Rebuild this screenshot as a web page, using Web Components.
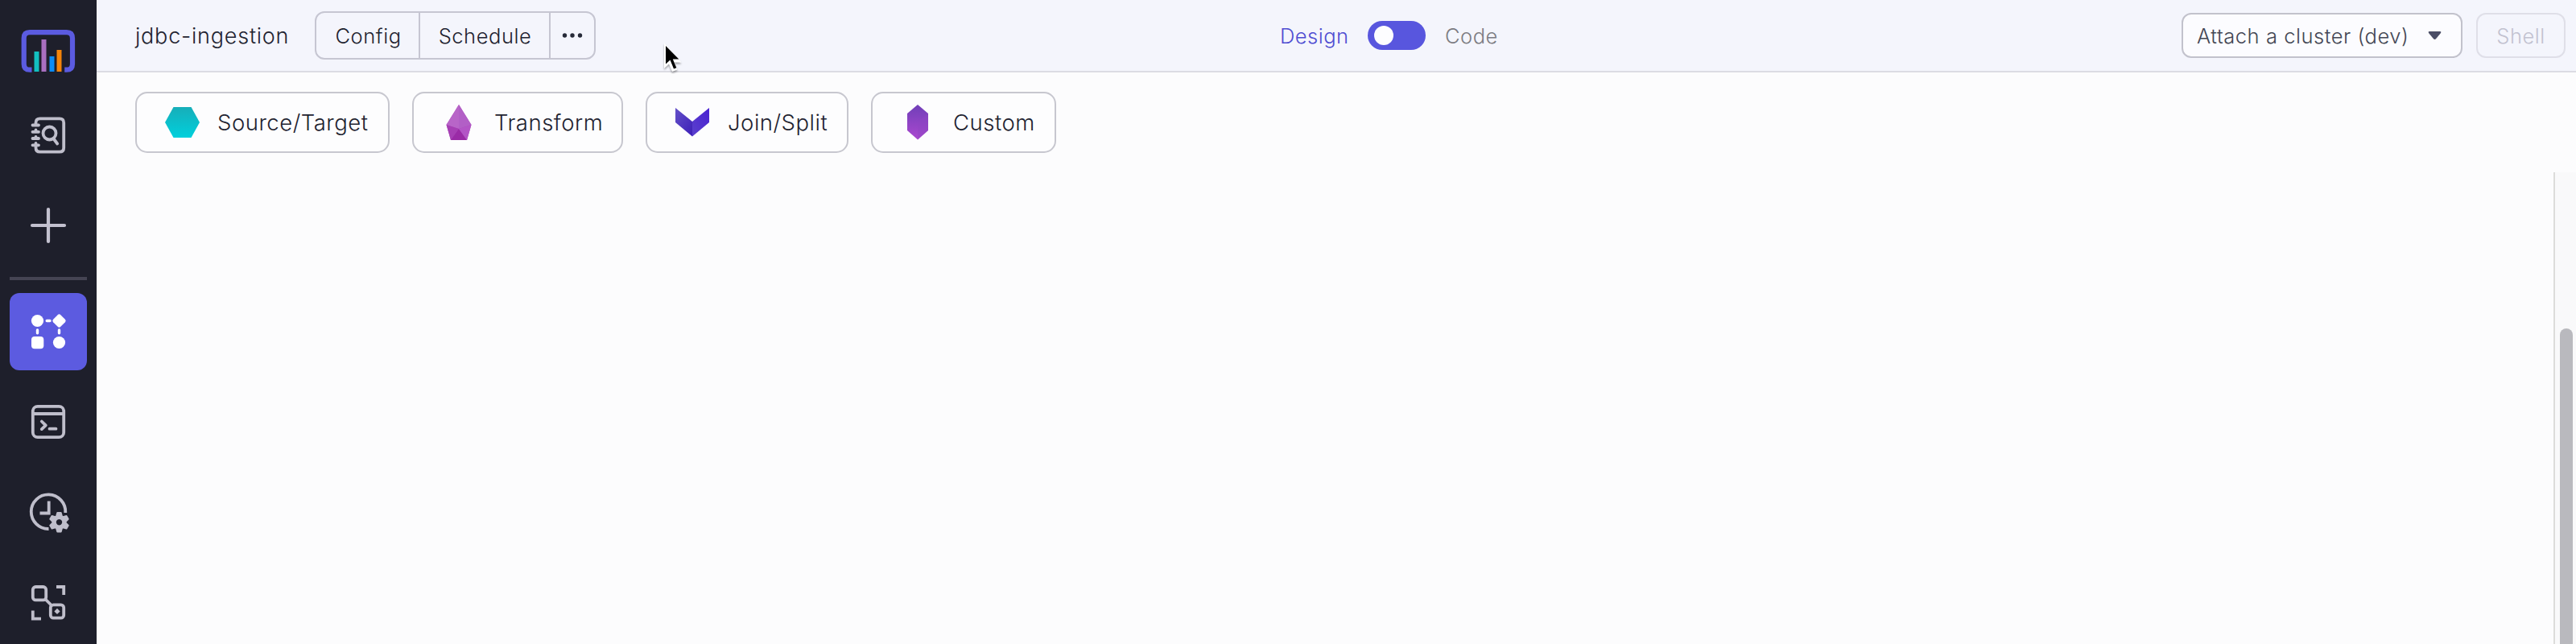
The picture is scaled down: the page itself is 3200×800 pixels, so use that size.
<!DOCTYPE html>
<html lang="en">
<head>
<meta charset="utf-8">
<title>jdbc-ingestion</title>
<style>
html,body{margin:0;height:100%;overflow:hidden}
body{font-family:Inter,"Liberation Sans",sans-serif;font-weight:300;color:#1f2330}
</style>
</head>
<body>
<pipeline-app></pipeline-app>
<script>
const define = (name, css, html) => customElements.define(name, class extends HTMLElement {
  constructor() {
    super();
    this.attachShadow({mode: 'open'}).innerHTML = `<style>*{box-sizing:border-box}svg{display:block}${css}</style>${html}`;
  }
});

define('nav-item', `
:host{display:flex;align-items:center;justify-content:center;width:96px;height:96px;flex:none;border-radius:12px}
:host([active]){background:#5c5be0}`, `<slot></slot>`);

define('side-nav', `
:host{display:flex;flex-direction:column;align-items:center;width:120px;height:800px;background:#1e1f2b;overflow:hidden}
svg{flex:none}
.logo{margin-top:37px;margin-bottom:30px}
.gap{margin-bottom:16px}
hr{width:96px;height:4px;border:0;margin:16px 0;background:#454453;flex:none}
`, `
<svg class="logo" width="68" height="53" viewBox="26.500 37 68 53" fill="none">
<path d="M40 86.700H37.500q-7.300 0-7.300-7.300V47.500q0-7.300 7.300-7.300h45.700q7.300 0 7.300 7.300v31.900q0 7.300-7.300 7.300h-2.500" stroke="#5b5be0" stroke-width="6.200"/>
<path d="M43 64h6v25h-6z" fill="#12bfc0"/><path d="M52 49h6v40h-6z" fill="#a96fc0"/><path d="M62 70h6v19h-6z" fill="#0a8cf5"/><path d="M71 62h6v27h-6z" fill="#f48409"/></svg>
<nav-item class="gap"><svg width="48" height="48" viewBox="36 144 48 48" fill="none" stroke="#bfbecb" stroke-width="3.800" stroke-linecap="round"><path d="M44.500 154v-1.500q0-5.200 5.200-5.200H74q5.200 0 5.200 5.200v31q0 5.200-5.200 5.200H49.700q-5.200 0-5.200-5.200V180M40.500 155.500h7.500M40.500 163.800h7.500M40.500 172h7.500M40.500 180.300h7.500M44.500 161.500v2M44.500 170v2M44.500 178v5"/><circle cx="61.500" cy="165.500" r="8"/><path d="m66.700 172.500 4.500 6"/></svg></nav-item>
<nav-item><svg width="48" height="48" fill="none" stroke="#c3c1cf" stroke-width="4.200" stroke-linecap="round"><path d="M24 4v40M4 24h40"/></svg></nav-item>
<hr>
<nav-item active class="gap"><svg width="48" height="48" viewBox="36 388 48 48" fill="#fff" stroke="#fff" stroke-width="3.400" stroke-linecap="round"><g stroke="none"><circle cx="46.500" cy="398.500" r="7.600"/><circle cx="73.500" cy="425.500" r="7.600"/><rect x="39" y="418" width="15.300" height="15.300" rx="4"/><rect x="67" y="392" width="13" height="13" rx="2.600" transform="rotate(45 73.500 398.500)"/></g><path d="M58.200 398.500h3.800M46.500 410v3.800M73.500 410v3.800"/></svg></nav-item>
<nav-item class="gap"><svg width="48" height="48" viewBox="36 500 48 48" fill="none" stroke="#bfbecb" stroke-width="3.800"><rect x="40.800" y="504.800" width="38.400" height="38.400" rx="6"/><path d="M41 514h38"/><path d="m51.800 523.500 5 4.800-5 4.800M61.500 532.700h8" stroke-linecap="round" stroke-linejoin="round"/></svg></nav-item>
<nav-item class="gap"><svg width="54" height="54" viewBox="33 609 54 54" fill="none" stroke="#bfbecb" stroke-width="3.800"><path d="M60.500 657A21.300 21.300 0 1 1 81.300 637"/><path d="M60.700 622.500v15H49.500"/><path fill="#bfbecb" stroke-width="2" stroke-linejoin="round" fill-rule="evenodd" d="M71.300 637h4.400l1.200 4.300 1.400.8 4.200-1.200 2.200 3.900-3 3.100v1.700l3 3.100-2.200 3.900-4.200-1.200-1.400.8-1.200 4.300h-4.400l-1.200-4.300-1.400-.8-4.200 1.200-2.200-3.900 3-3.100v-1.700l-3-3.100 2.200-3.900 4.200 1.200 1.400-.8zM73.500 644a4.700 4.700 0 1 0 .01 0z"/></svg></nav-item>
<nav-item><svg width="48" height="48" viewBox="36 724 48 48" fill="none" stroke="#bfbecb" stroke-width="3.800"><rect x="40.800" y="729" width="16.400" height="16.400" rx="3.500"/><rect x="62.800" y="751.300" width="16.400" height="16.400" rx="3.500"/><path d="m56.500 744.500 8 8M70 729h9.200v10M40.800 758.500v10.200H51"/><path d="m71 755.800 3.600 3.600-3.600 3.600-3.600-3.600z" fill="#bfbecb" stroke="none"/></svg></nav-item>`);

define('button-group', `
:host{display:flex;width:349px;height:60px;border:2px solid #c6c6d2;border-radius:12px;overflow:hidden;font-size:25.500px;letter-spacing:.55px;box-sizing:border-box}
div{display:flex;align-items:center;justify-content:center}
.a{width:127px;padding-left:2px}.b{width:164px;padding-left:1px;border-left:2px solid #c6c6d2;border-right:2px solid #c6c6d2}.c{flex:1}`, `
<div class="a">Config</div><div class="b">Schedule</div><div class="c"><svg width="26" height="6" fill="#262a38"><circle cx="3.500" cy="3" r="2.700"/><circle cx="13" cy="3" r="2.700"/><circle cx="22.500" cy="3" r="2.700"/></svg></div>`);

define('mode-toggle', `
:host{display:flex;align-items:center;font-size:25.500px;letter-spacing:.5px}
.d{color:#4f4dd2;width:109px}.c{color:#7c7c82;margin-left:24px}
.t{width:72px;height:36px;border-radius:18px;background:#5856de;padding:6px 8px}
.t i{display:block;width:24px;height:24px;border-radius:50%;background:#fdfdff}`, `
<span class="d">Design</span><span class="t"><i></i></span><span class="c">Code</span>`);

define('cluster-select', `
:host{display:flex;align-items:center;justify-content:space-between;width:349px;height:56px;border:2px solid #c2c2cc;border-radius:12px;background:#fcfcff;padding:0 24px 0 17px;font-size:25.500px;letter-spacing:.55px;color:#444754;box-sizing:border-box;white-space:nowrap}`, `
<span><slot></slot></span><svg width="17" height="11"><path d="M1.500 0h14q1.500.5.500 2L10 9.300q-1.500 1.500-3 0L1 2Q0 .5 1.500 0z" fill="#4b4e66"/></svg>`);

define('shell-button', `
:host{display:flex;align-items:center;justify-content:center;width:111px;height:56px;border:2px solid #dfdfe8;border-radius:12px;font-size:25.500px;letter-spacing:.5px;color:#c2c2d0;box-sizing:border-box}`, `<slot></slot>`);

define('top-bar', `
:host{display:flex;align-items:center;height:90px;background:#f4f5fc;border-bottom:2px solid #dcdce3;box-sizing:border-box;position:relative;padding:0 13px 0 48px}
.title{width:223px;font-size:27px;letter-spacing:.77px;white-space:nowrap}
mode-toggle{margin-left:850px}
cluster-select{margin-left:auto;margin-right:17px}
.cursor{position:absolute;left:702px;top:50px}`, `
<span class="title">jdbc-ingestion</span><button-group></button-group><mode-toggle></mode-toggle>
<cluster-select>Attach a cluster (dev)</cluster-select><shell-button>Shell</shell-button>
<svg class="cursor" width="30" height="42" viewBox="822 50 30 42"><path d="M825 53v32l6-5.500 4 9.500 6.500-2.500-3.500-9h8.500z" fill="#fff" style="filter:drop-shadow(0 2px 1px #0005)"/><path d="M827 57v22.500l5.500-5L837 85.500l3.300-1.300-4.500-10.700h7.500z" fill="#000"/></svg>`);

define('gem-button', `
:host{display:flex;align-items:center;height:76px;border:2px solid #c7c7cf;border-radius:15px;padding-left:32px;box-sizing:border-box;font-size:27.500px;letter-spacing:.51px;background:#fdfdfe;white-space:nowrap}
slot[name=icon]{display:block;width:48px;height:48px}.l{margin-left:20px}`, `
<slot name="icon"></slot><span class="l"><slot></slot></span>`);

define('gem-bar', `
:host{display:flex;gap:28px;padding:24px 48px 24px}
.s{width:316px}.t{width:262px}.j{width:252px}.c{width:230px}`, `
<gem-button class="s"><svg slot="icon" width="48" height="48"><defs><linearGradient id="g" x2="0" y2="1"><stop stop-color="#17aeb9"/><stop offset="1" stop-color="#00d0dc"/></linearGradient></defs><path d="M13.500 5h22L46 24 35.500 43h-22L3 24z" fill="url(#g)"/></svg>Source/Target</gem-button>
<gem-button class="t"><svg slot="icon" width="48" height="48"><path d="M24 2 39.500 27 34 46H14L8.500 27z" fill="#ab4dbb"/><path d="M24 2 8.500 27 24 32z" fill="#b865c8"/><path d="M24 2 39.500 27 24 32z" fill="#b25fc6"/><path d="M8.500 27 24 32 14 46z" fill="#a63fb4"/><path d="M24 32 34 46H14z" fill="#9a2ba6"/><path d="M39.500 27 34 46 24 32z" fill="#b355c6"/></svg>Transform</gem-button>
<gem-button class="j"><svg slot="icon" width="48" height="48"><defs><linearGradient id="l" x2="1" y2="1"><stop stop-color="#6350c8"/><stop offset="1" stop-color="#3d1fb8"/></linearGradient><linearGradient id="r" x1="1" x2="0" y2="1"><stop stop-color="#4a22d2"/><stop offset="1" stop-color="#5a40cc"/></linearGradient></defs><path d="M3 6 24 23v18.500L3 24z" fill="url(#l)"/><path d="M45 6 24 23v18.500L45 24z" fill="url(#r)"/></svg>Join/Split</gem-button>
<gem-button class="c"><svg slot="icon" width="48" height="48"><defs><linearGradient id="c" x2="0" y2="1"><stop stop-color="#703fb8"/><stop offset="1" stop-color="#ab48d0"/></linearGradient></defs><path d="M24 2l13 11v21L24 45.500 11 34V13z" fill="url(#c)"/><path d="M24 23l13-10v21L24 45.500z" fill="#8f45c4" opacity=".4"/></svg>Custom</gem-button>`);

define('pipeline-canvas', `
:host{display:flex;justify-content:flex-end;flex:1;min-height:0}
.track{width:28px;border-left:2px solid #dcdcda;background:#f9f9fa;padding:194px 4px 0 6px;overflow:hidden}
.thumb{height:420px;border-radius:8px;background:#b9b9be}`, `<div class="track"><div class="thumb"></div></div>`);

define('pipeline-app', `
:host{display:flex;height:800px;background:#fcfcfd}
main{flex:1;display:flex;flex-direction:column;min-width:0}`, `
<side-nav></side-nav><main><top-bar></top-bar><gem-bar></gem-bar><pipeline-canvas></pipeline-canvas></main>`);
</script>
</body>
</html>
